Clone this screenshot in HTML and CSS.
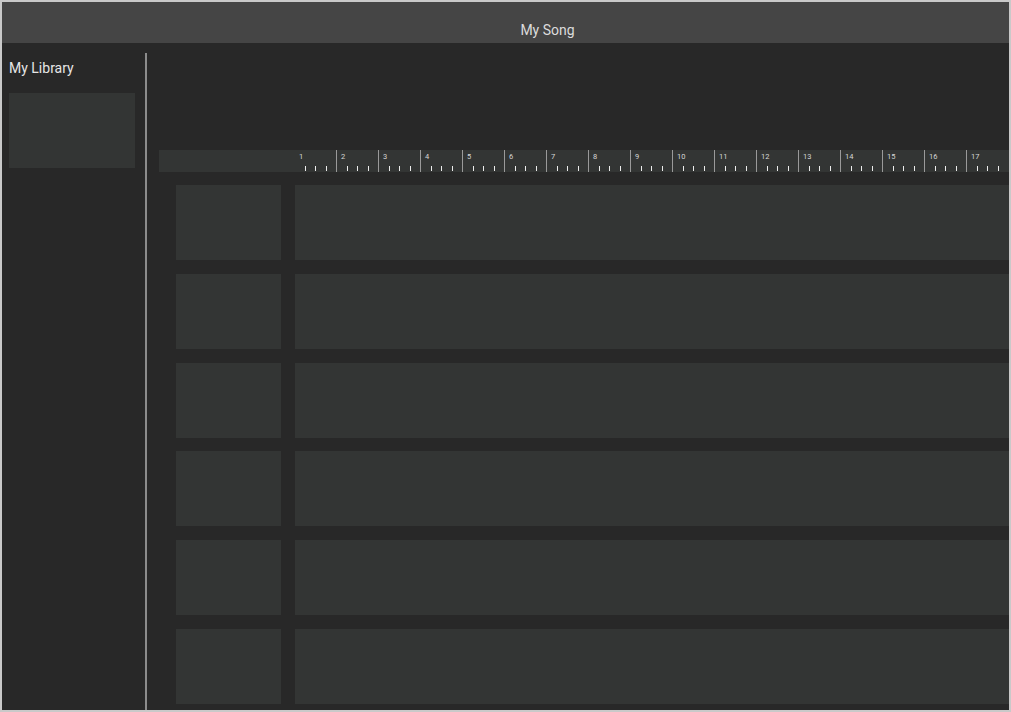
FILE: index.html
```html
<!DOCTYPE html>
<html>
<head>
<meta charset="utf-8">
<title>My Song</title>
<link rel="stylesheet" href="styles.css">
</head>
<body>
<div class="app">
  <header class="titlebar">My Song</header>
  <div class="workspace">
    <aside class="sidebar">
      <div class="sidebar-title">My Library</div>
      <div class="library-card"></div>
    </aside>
    <div class="divider"></div>
    <main class="arrange">
      <div class="ruler">
        <div class="ruler-spacer"></div>
        <div class="measures">
          <div class="measure first"><span class="num">1</span><div class="ticks"><i></i><i></i><i></i></div></div>
          <div class="measure"><span class="num">2</span><div class="ticks"><i></i><i></i><i></i></div></div>
          <div class="measure"><span class="num">3</span><div class="ticks"><i></i><i></i><i></i></div></div>
          <div class="measure"><span class="num">4</span><div class="ticks"><i></i><i></i><i></i></div></div>
          <div class="measure"><span class="num">5</span><div class="ticks"><i></i><i></i><i></i></div></div>
          <div class="measure"><span class="num">6</span><div class="ticks"><i></i><i></i><i></i></div></div>
          <div class="measure"><span class="num">7</span><div class="ticks"><i></i><i></i><i></i></div></div>
          <div class="measure"><span class="num">8</span><div class="ticks"><i></i><i></i><i></i></div></div>
          <div class="measure"><span class="num">9</span><div class="ticks"><i></i><i></i><i></i></div></div>
          <div class="measure"><span class="num">10</span><div class="ticks"><i></i><i></i><i></i></div></div>
          <div class="measure"><span class="num">11</span><div class="ticks"><i></i><i></i><i></i></div></div>
          <div class="measure"><span class="num">12</span><div class="ticks"><i></i><i></i><i></i></div></div>
          <div class="measure"><span class="num">13</span><div class="ticks"><i></i><i></i><i></i></div></div>
          <div class="measure"><span class="num">14</span><div class="ticks"><i></i><i></i><i></i></div></div>
          <div class="measure"><span class="num">15</span><div class="ticks"><i></i><i></i><i></i></div></div>
          <div class="measure"><span class="num">16</span><div class="ticks"><i></i><i></i><i></i></div></div>
          <div class="measure"><span class="num">17</span><div class="ticks"><i></i><i></i><i></i></div></div>
        </div>
      </div>
      <div class="tracks">
        <div class="track"><div class="track-head"></div><div class="track-lane"></div></div>
        <div class="track"><div class="track-head"></div><div class="track-lane"></div></div>
        <div class="track"><div class="track-head"></div><div class="track-lane"></div></div>
        <div class="track"><div class="track-head"></div><div class="track-lane"></div></div>
        <div class="track"><div class="track-head"></div><div class="track-lane"></div></div>
        <div class="track"><div class="track-head"></div><div class="track-lane"></div></div>
      </div>
    </main>
  </div>
</div>
</body>
</html>
```
FILE: styles.css
```css
* { box-sizing: border-box; }
html, body {
  margin: 0;
  padding: 0;
  width: 1011px;
  height: 712px;
  overflow: hidden;
  background: #c9c9c9;
  font-family: Roboto, "Noto Sans", sans-serif;
}
.app {
  margin: 2px 0 0 2px;
  width: 1007px;
  height: 708px;
  display: flex;
  flex-direction: column;
  background: #282828;
  overflow: hidden;
}
.titlebar {
  height: 41px;
  flex: none;
  background: #454545;
  color: #dcdcdc;
  font-size: 14px;
  display: flex;
  align-items: center;
  justify-content: center;
  padding-top: 15px;
  padding-left: 84px;
}
.workspace {
  flex: 1;
  display: flex;
  min-height: 0;
}
.sidebar {
  width: 143px;
  flex: none;
  padding: 16px 0 0 7px;
}
.sidebar-title {
  color: #e6e6e6;
  font-size: 14px;
  line-height: 18px;
}
.library-card {
  margin-top: 16px;
  width: 126px;
  height: 75px;
  background: #333534;
}
.divider {
  width: 2px;
  flex: none;
  margin-top: 10px;
  background: #8c8c8c;
  margin-bottom: -4px;
}
.arrange {
  flex: 1;
  min-width: 0;
  overflow: hidden;
  padding: 107px 0 0 12px;
}
.ruler {
  height: 22px;
  display: flex;
  background: #333534;
}
.ruler-spacer {
  width: 135px;
  flex: none;
}
.measures {
  display: flex;
  flex: none;
}
.measure {
  width: 42px;
  height: 22px;
  flex: none;
  border-left: 1px solid #9a9a9a;
  display: flex;
  flex-direction: column;
  justify-content: space-between;
}
.measure.first {
  border-left-color: transparent;
}
.num {
  color: #d6d6d6;
  font-size: 7.5px;
  line-height: 8px;
  padding: 3px 0 0 4px;
}
.ticks {
  display: flex;
  gap: 9.5px;
  padding-left: 9.5px;
  padding-bottom: 1px;
}
.ticks i {
  display: block;
  width: 1px;
  height: 5px;
  background: #ececec;
}
.tracks {
  padding: 13px 0 0 17px;
  display: flex;
  flex-direction: column;
  gap: 13.8px;
}
.track {
  display: flex;
  gap: 14px;
  height: 75px;
}
.track-head {
  width: 105px;
  flex: none;
  background: #333534;
}
.track-lane {
  width: 760px;
  flex: none;
  background: #333534;
}
```
